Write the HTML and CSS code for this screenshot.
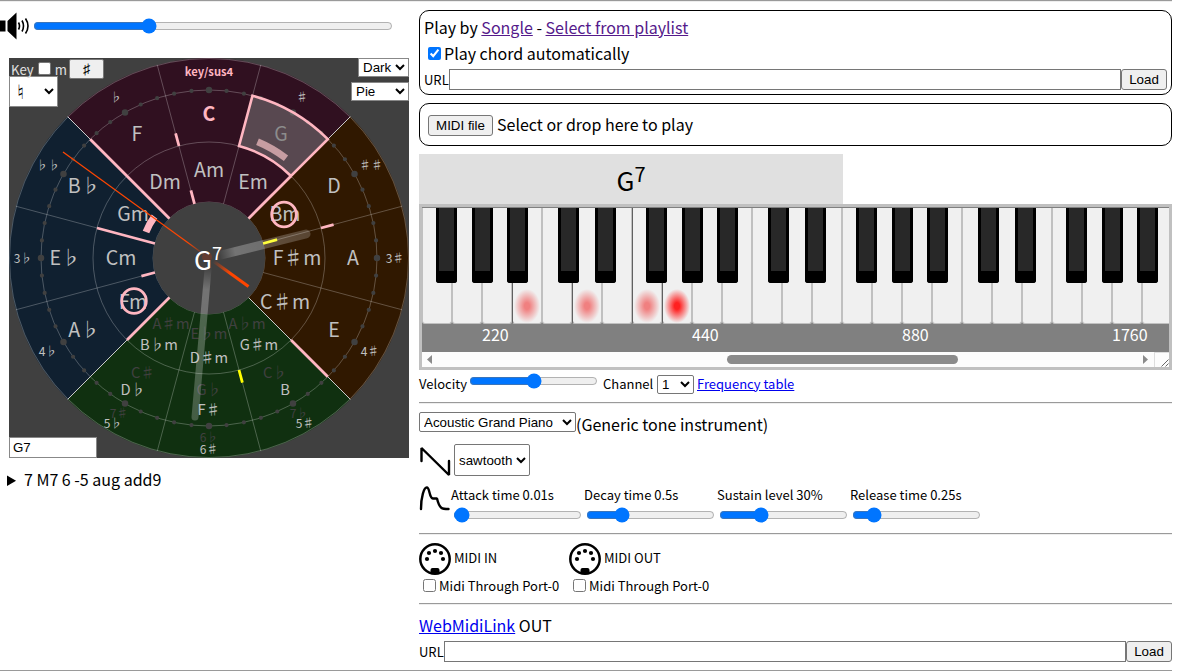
FILE: index.html
```html
<!DOCTYPE html>
<html lang="en">
<head>
<meta charset="utf-8">
<title>Chord wheel</title>
<link rel="stylesheet" href="styles.css">
</head>
<body>
<hr>
<main class="app">
  <section class="left">
    <div class="volume">
      <svg class="speaker" width="30" height="28" viewBox="0 0 30 28"><path d="M0 8.500h5.500v11H0zM7.500 9l9-8.500v27L7.500 19z"/><path class="wave" d="M18.500 10.500q2 3.500 0 7M22 8.500q3 5.500 0 11M25.500 6.500q5 7.500 0 15"/></svg>
      <input type="range" class="volume-range" min="0" max="100" value="31.3" step="0.1">
    </div>
    <div class="dial">
      <svg class="wheel" width="400" height="400" viewBox="-200 -200 400 400">
        <defs>
          <linearGradient id="hour" gradientUnits="userSpaceOnUse" x1="0" y1="0" x2="97" y2="-24"><stop offset=".1" stop-color="#fff" stop-opacity="0"/><stop offset=".27" stop-color="#fff" stop-opacity=".27"/><stop offset="1" stop-color="#fff" stop-opacity=".2"/></linearGradient>
          <linearGradient id="minute" gradientUnits="userSpaceOnUse" x1="0" y1="0" x2="-14" y2="159"><stop offset=".05" stop-color="#fff" stop-opacity="0"/><stop offset=".2" stop-color="#fff" stop-opacity=".27"/><stop offset="1" stop-color="#fff" stop-opacity=".22"/></linearGradient>
          <radialGradient id="second" gradientUnits="userSpaceOnUse" cx="0" cy="0" r="26"><stop offset=".2" stop-color="#ff4500" stop-opacity="0"/><stop offset="1" stop-color="#ff4500"/></radialGradient>
        </defs>
        <path fill="#301020" d="M0 0L-141.400-141.400A200 200 0 0 1 141.400-141.400z"/>
        <path fill="#301800" d="M0 0L141.400-141.400A200 200 0 0 1 141.400 141.400z"/>
        <path fill="#103010" d="M0 0L141.400 141.400A200 200 0 0 1-141.400 141.400z"/>
        <path fill="#102030" d="M0 0L-141.400 141.400A200 200 0 0 1-141.400-141.400z"/>
        <g class="grid">
          <circle r="56"/><circle r="116"/><circle r="168"/><circle r="199.500"/>
          <path d="M-51.800-193.200L51.800 193.200M51.800-193.200L-51.800 193.200M-193.200-51.800L193.200 51.800M193.200-51.800L-193.200 51.800"/>
        </g>
        <path class="season" d="M-141.400-141.400L141.400 141.400M141.400-141.400L-141.400 141.400"/>
        <circle class="ticks" r="168" pathLength="60"/>
        <circle class="ticks major" r="168" pathLength="12"/>
        <circle r="56" fill="#404040"/>
        <g class="tones" id="labels"></g>
        <path class="chosen" d="M43.500-162.300A168 168 0 0 1 118.800-118.800L82-82A116 116 0 0 0 30-112z"/>
        <g class="scale">
          <path d="M-118.800-118.800L-39.600-39.600M39.600-39.600L82-82M-112-30L-54.100-14.500M-82 82L-39.600 39.600M82 82L118.800 118.800M-30-112L-33.400-124.600M-14.500-54.100L-18.100-67.600M112-30L124.600-33.400M-54.100 14.500L-67.600 18.100"/>
          <path class="yellow" d="M54.100-14.500L68.100-18.300M30 112L33.400 124.600"/>
          <circle cx="75" cy="-43.500" r="12.300"/><circle cx="-75" cy="43" r="12.300"/>
          <path class="bar" d="M-54.500-41.300A68 68 0 0 0-63-26"/>
          <path class="bar soft" d="M48.500-116.300A126 126 0 0 1 77-99.800"/>
        </g>
        <path stroke="url(#hour)" stroke-width="9" stroke-linecap="round" d="M0 0L97-24"/>
        <path stroke="url(#minute)" stroke-width="7" stroke-linecap="round" d="M0 0L-14 159"/>
        <circle cx="-2" cy="-1" r="5" fill="#643c30"/>
        <path stroke="url(#second)" stroke-width="1.200" d="M0 0L-146-106"/>
        <path stroke="url(#second)" stroke-width="3" d="M0 0L39.500 28.500"/>
        <text class="center" x="-15" y="11.600">G<tspan class="super" dy="-9.600">7</tspan></text>
      </svg>
      <div class="key-tools">
        <div class="key-row"><span>Key</span><input type="checkbox" class="minor"><span>m</span><button class="sharp">♯</button></div>
        <select class="natural"><option>♮</option></select>
      </div>
      <div class="view-tools">
        <select class="plain theme"><option>Dark</option></select>
        <select class="plain shape"><option>Pie</option></select>
      </div>
      <input class="chord-input" value="G7">
    </div>
    <details><summary>7 M7 6 -5 aug add9</summary></details>
  </section>

  <section class="right">
    <div class="box songle">
      <div class="songle-title">Play by <a class="visited" href="#">Songle</a> - <a class="visited" href="#">Select from playlist</a></div>
      <label class="auto"><input type="checkbox" checked><span>Play chord automatically</span></label>
      <div class="url-row"><span>URL</span><input type="text"><button>Load</button></div>
    </div>
    <div class="box midi-file"><button>MIDI file</button><span>Select or drop here to play</span></div>
    <div class="chord-name"><span>G<sup>7</sup></span></div>
    <div class="piano">
      <div class="keys" id="keys"></div>
      <div class="freq"><span>220</span><span>440</span><span>880</span><span>1760</span></div>
      <div class="scroll">
        <svg width="15" height="15"><path fill="#8b8b8b" d="M10 3v9L5 7.500z"/></svg>
        <div class="track"><div class="thumb"></div></div>
        <svg width="15" height="15"><path fill="#8b8b8b" d="M4 3v9l5-4.500z"/></svg>
        <svg class="corner" width="15" height="15"><path stroke="#666" d="M6.500 13.500l7-7M10.500 13.500l3-3"/></svg>
      </div>
    </div>
    <div class="velocity small">
      <span class="vel-label">Velocity</span><input type="range" value="50"><span class="channel">Channel</span>
      <select class="channel-select"><option>1</option></select><a href="#">Frequency table</a>
    </div>
    <hr>
    <div class="instrument"><select><option>Acoustic Grand Piano</option></select><span>(Generic tone instrument)</span></div>
    <div class="waveform">
      <svg width="32" height="34"><path class="ink" d="M2.500 17V4L30 31V17"/></svg>
      <select><option>sawtooth</option></select>
    </div>
    <div class="envelope small">
      <svg width="32" height="29"><path class="ink" d="M2 24C2 12 5 2 8 2.500S10 13 14 13.500h4C20.500 24 23 24 29.500 24"/></svg>
      <label>Attack time 0.01s<input type="range" value="1"></label>
      <label>Decay time 0.5s<input type="range" value="25"></label>
      <label>Sustain level 30%<input type="range" value="30"></label>
      <label>Release time 0.25s<input type="range" value="12"></label>
    </div>
    <hr>
    <div class="ports small">
      <div class="port"><div class="port-head"><svg class="din" width="32" height="32" viewBox="0 0 32 32"><circle class="shell" cx="16" cy="16" r="14.700"/><circle cx="8" cy="16" r="2.100"/><circle cx="10" cy="10" r="2.100"/><circle cx="16" cy="8" r="2.100"/><circle cx="22" cy="10" r="2.100"/><circle cx="24" cy="16" r="2.100"/><path d="M11.500 31v-4q0-2 2-2h5q2 0 2 2v4z"/></svg><span>MIDI IN</span></div><label><input type="checkbox">Midi Through Port-0</label></div>
      <div class="port"><div class="port-head"><svg class="din" width="32" height="32" viewBox="0 0 32 32"><circle class="shell" cx="16" cy="16" r="14.700"/><circle cx="8" cy="16" r="2.100"/><circle cx="10" cy="10" r="2.100"/><circle cx="16" cy="8" r="2.100"/><circle cx="22" cy="10" r="2.100"/><circle cx="24" cy="16" r="2.100"/><path d="M11.500 31v-4q0-2 2-2h5q2 0 2 2v4z"/></svg><span>MIDI OUT</span></div><label><input type="checkbox">Midi Through Port-0</label></div>
    </div>
    <hr>
    <div class="link-title"><a href="#">WebMidiLink</a> OUT</div>
    <div class="url-row link-url"><span>URL</span><input type="text"><button>Load</button></div>
  </section>
</main>
<hr class="last">
<script src="app.js"></script>
</body>
</html>
```
FILE: styles.css
```css
* { box-sizing: border-box; }
body { margin: 0; width: 1172px; height: 671px; overflow: hidden; background: #fff; color: #000; font-family: "Noto Sans CJK JP", sans-serif; font-size: 16px; line-height: 26px; }
hr { margin: 0; height: 2px; border: 0; border-top: 1px solid #9a9a9a; border-bottom: 1px solid #eee; }
a { color: #00e; }
a.visited { color: #551a8b; }
button, input, select { font-family: "Liberation Sans", Arial, sans-serif; font-size: 13.333px; margin: 0; }
.small { font-size: 13px; line-height: 20px; }
.app { display: flex; gap: 10px; height: 668px; }
.left { width: 409px; }
.right { width: 753px; padding-top: 8px; }

.volume { display: flex; align-items: center; height: 48px; padding-bottom: 1px; }
.speaker { flex: none; }
.wave { fill: none; stroke: #000; stroke-width: 1.600; }
.volume-range { width: 360px; margin-left: 3px; }
.dial { position: relative; width: 400px; height: 400px; margin: 8px 0 0 9px; background: #404040; overflow: hidden; }
.wheel { display: block; }
.grid { fill: none; stroke: #fff; stroke-opacity: .25; }
.season { stroke: #ccc; stroke-width: 1; }
.ticks { fill: none; stroke: #404040; stroke-width: 4.200; stroke-linecap: round; stroke-dasharray: 0 1; }
.ticks.major { stroke-width: 6.500; }
.chosen { fill: #808080; fill-opacity: .5; stroke: #ffb6c1; stroke-width: 2.600; }
.scale { fill: none; stroke: #ffb6c1; stroke-width: 2.800; }
.scale .yellow { stroke: #ff0; }
.scale .bar { stroke-width: 7; }
.scale .soft { stroke: #c79da2; }
.tones { fill: #c0c0c0; text-anchor: middle; font-size: 19.600px; }
.tones .sig { font-size: 12px; }
.tones .mid { font-size: 14.700px; }
.tones .dim { fill: #404040; }
.tones .key { fill: #ffb6c1; font-weight: bold; }
.tones .title { font-size: 11.200px; }
.tones .gray { fill: #999; }
.center { fill: #fff; font-size: 26px; }
.super { font-size: 18px; }
.key-tools { position: absolute; left: 0; top: 0; color: #e0e0e0; }
.key-row { display: flex; align-items: center; height: 22px; font-size: 13.200px; padding-left: 2px; line-height: 20px; }
.key-row span { padding-top: 1px; }
.minor { appearance: none; width: 13px; height: 13px; background: #fff; border: 1px solid #777; border-radius: 2px; margin: 0 4px 2px 4px; }
.sharp { width: 35px; height: 20px; margin-left: 2px; padding: 0; border: 1px solid #777; border-radius: 2px; background: #efefef; font-size: 14.500px; line-height: 16px; }
.natural { display: block; width: 49px; height: 31px; margin-top: -4px; background: #fff; border: 1px solid #888; border-radius: 0; padding-left: 3px; font-size: 20px; }
.view-tools { position: absolute; right: 0; top: 0; display: flex; flex-direction: column; align-items: flex-end; gap: 5px; }
.plain { height: 19px; background: #fff; border: 1px solid #888; border-radius: 0; }
.theme { width: 51px; }
.shape { width: 58px; }
.chord-input { position: absolute; left: 0; bottom: 0; width: 88px; height: 21px; border: 1px solid #888; padding: 1px 3px; background: #fff; }
details { margin: 8px 0 0 7px; }

.box { border: 1px solid #000; border-radius: 10px; }
.songle { height: 85px; padding: 3px 4px 4px; }
.auto { display: flex; align-items: center; height: 27px; }
.auto input { width: 13px; height: 13px; margin: 0 3px 1px 4px; }
.auto span { padding-bottom: 1px; }
.url-row { display: flex; align-items: center; height: 21px; margin-top: 2px; font-size: 13px; }
.url-row span { width: 25px; }
.link-url span { width: 25px; }
.url-row input { flex: 1; height: 21px; border: 1px solid #767676; }
.url-row button { width: 46px; height: 21px; padding: 0; }
button { border: 1px solid #767676; border-radius: 3px; background: #efefef; color: #000; }
.midi-file { display: flex; align-items: center; gap: 4px; height: 43px; margin-top: 8px; padding-left: 8px; }
.midi-file button { width: 65px; height: 21px; padding: 0; margin-top: 2px; }
.midi-file span { padding-bottom: 2px; }
.chord-name { width: 424px; height: 50px; margin-top: 8px; background: #e0e0e0; text-align: center; font-size: 26px; line-height: 52px; }
.chord-name sup { font-size: 20px; line-height: 0; vertical-align: 9px; }
.piano { border: 3px solid silver; height: 166px; overflow: hidden; }
.keys { position: relative; display: flex; height: 117px; background: #808080; border-top: 1px solid #808080; overflow: hidden; }
.white { flex: none; width: 30px; height: 116px; background: #f0f0f0; border: 1px solid silver; border-top: 0; border-radius: 0 0 3px 3px; }
.white.pressed { border-left-color: #606060; background: radial-gradient(ellipse 13px 17px at 14px 98px, var(--dot) 20%, transparent 100%) #f0f0f0; --dot: #f08080; }
.white.root { --dot: #ff2020; }
.black { position: absolute; top: 0; width: 21px; height: 75px; background: #282828; border: 3px solid #000; border-top: 0; border-bottom-width: 12px; border-radius: 0 0 3px 3px; }
.freq { display: flex; height: 28px; padding-left: 60px; background: #808080; color: #fff; font-size: 16px; line-height: 20px; }
.freq span { flex: none; width: 210px; }
.scroll { display: flex; height: 15px; background: #fcfcfc; }
.scroll svg { flex: none; }
.track { flex: 1; padding: 3px 0 3px 290px; }
.thumb { width: 231px; height: 9px; border-radius: 5px; background: #8b8b8b; }
.corner { border-left: 1px solid #ddd; border-top: 1px solid #ddd; }
.velocity { display: flex; align-items: center; height: 32px; padding-bottom: 4px; }
.vel-label { width: 49px; }
.velocity input { width: 129px; margin: 0 5px 6px 1px; }
.channel { width: 51px; }
.channel-select { width: 37px; height: 19px; margin: 0 3px; }
.instrument { display: flex; height: 40px; padding-top: 8px; }
.instrument select { width: 157px; height: 20px; }
.instrument span { margin-top: -1px; }
.waveform { display: flex; gap: 3px; height: 39px; }
.waveform select { width: 76px; height: 32px; }
.ink { fill: none; stroke: #000; stroke-width: 2.400; stroke-linecap: round; stroke-linejoin: bevel; }
.envelope { display: flex; height: 50px; padding-top: 2px; }
.envelope label { width: 133px; display: flex; flex-direction: column; }
.envelope input { width: 129px; height: 16px; margin: 2px 0 0 2px; }
.ports { display: flex; height: 68px; padding-top: 8px; }
.port { width: 150px; }
.port-head { display: flex; align-items: center; gap: 3px; height: 32px; }
.port-head span { padding-bottom: 2px; }
.port label { display: flex; align-items: center; height: 22px; white-space: nowrap; }
.port label input { width: 13px; height: 13px; margin: 0 3px 2px 4px; }
.shell { fill: none; stroke: #000; stroke-width: 2.500; }
.link-title { height: 34px; padding-top: 7px; }
select { color: #000; background: #fff; border: 1px solid #767676; border-radius: 2px; padding: 0; }
```
FILE: app.js
```js
const labels = [
  ["key/sus4", 0, -186, "sig key title"], ["♭", -93, -160, "sig"], ["♯", 93, -160, "sig"],
  ["♭♭", -161, -92, "sig"], ["♯♯", 162, -92, "sig"], ["3♭", -186, 0.5, "sig"], ["3♯", 186, 0.5, "sig"],
  ["4♭", -161, 93.5, "sig"], ["4♯", 161, 93.5, "sig"], ["7♯", -90, 156, "sig dim"], ["5♭", -96, 166, "sig"],
  ["7♭", 90, 156, "sig dim"], ["5♯", 96, 166, "sig"], ["6♭", 0, 180, "sig dim"], ["6♯", 0, 192, "sig"],
  ["C", 0, -144, "key"], ["F", -72, -124], ["G", 72, -124, "gray"], ["B♭", -125, -72], ["D", 125, -72],
  ["E♭", -144, 0], ["A", 144, 0], ["A♭", -125, 72], ["E", 125, 72],
  ["C♯", -66, 115, "mid dim"], ["D♭", -76, 132, "mid"], ["C♭", 66, 115, "mid dim"], ["B", 76, 132, "mid"],
  ["G♭", 0, 132, "mid dim"], ["F♯", 0, 152, "mid"],
  ["Am", 0, -88], ["Dm", -44, -76], ["Em", 44, -76], ["Gm", -76, -44], ["Bm", 76, -44],
  ["Cm", -88, 0], ["F♯m", 88, 0], ["Fm", -76, 44], ["C♯m", 76, 44],
  ["A♯m", -38, 66, "mid dim"], ["B♭m", -50, 87, "mid"], ["E♭m", 0, 76, "mid dim"], ["D♯m", 0, 100, "mid"],
  ["A♭m", 38, 66, "mid dim"], ["G♯m", 50, 87, "mid"]
];
const group = document.getElementById("labels");
for (const [text, x, y, cls = ""] of labels) {
  const drop = cls.includes("sig") ? 4.4 : cls.includes("mid") ? 5 : 7.4;
  const node = document.createElementNS("http://www.w3.org/2000/svg", "text");
  node.setAttribute("x", x);
  node.setAttribute("y", y + drop);
  node.setAttribute("class", cls);
  node.textContent = text;
  group.append(node);
}

const keys = document.getElementById("keys");
const pressed = [3, 5, 7, 8];
for (let i = 0; i < 25; i++) {
  const key = document.createElement("div");
  key.className = "white" + (pressed.includes(i) ? " pressed" : "") + (i === 8 ? " root" : "");
  keys.append(key);
}
for (const x of [14, 50, 85, 136, 173, 224, 260, 295, 346, 383, 434, 470, 505, 556, 593, 644, 680, 715]) {
  const key = document.createElement("div");
  key.className = "black";
  key.style.left = x + "px";
  keys.append(key);
}
```
